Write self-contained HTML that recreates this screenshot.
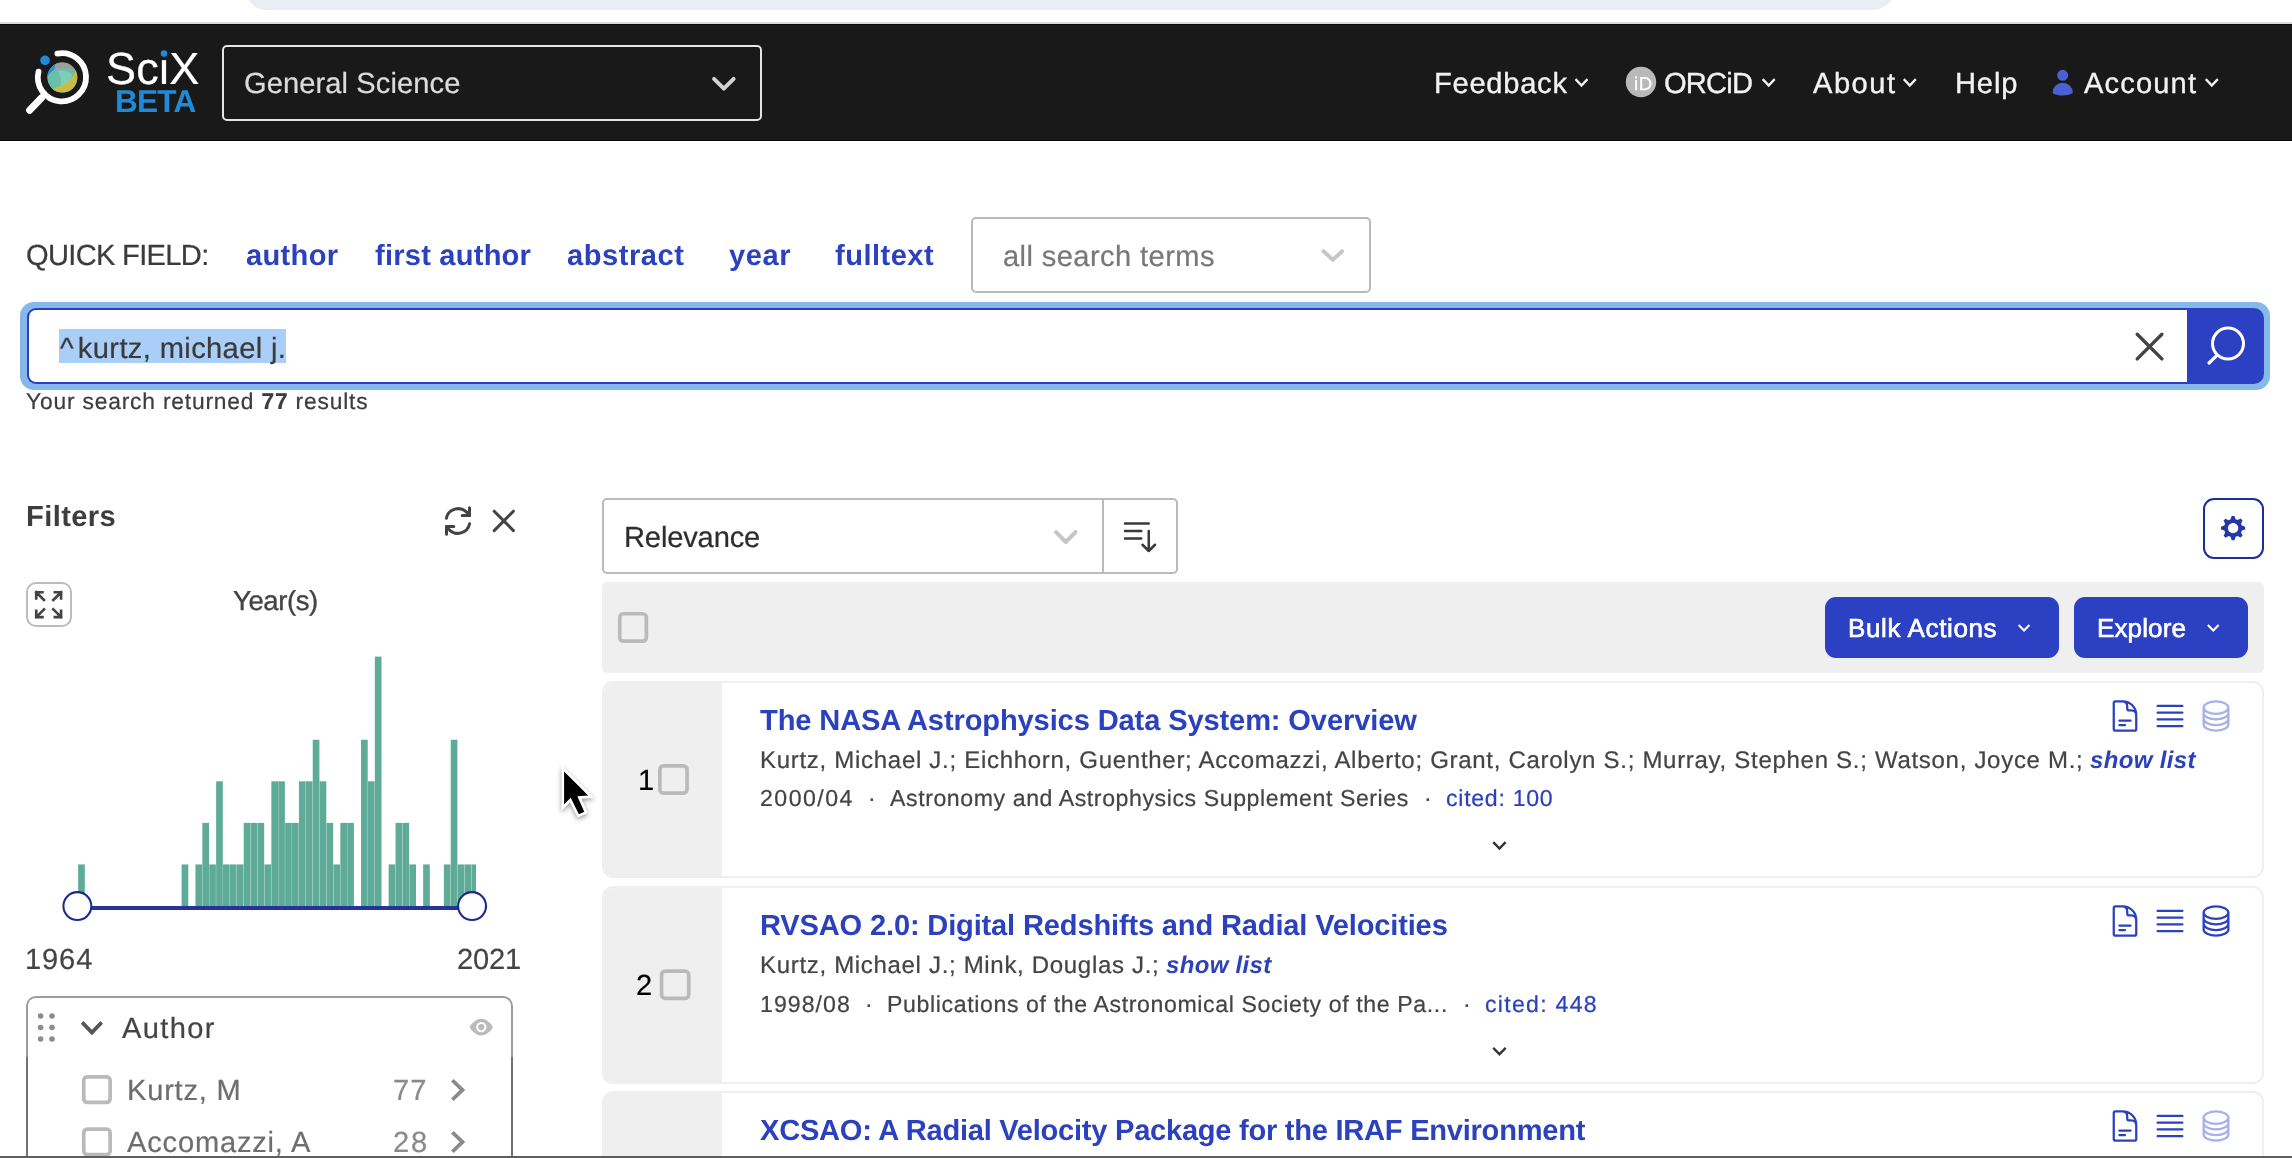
<!DOCTYPE html>
<html lang="en"><head><meta charset="utf-8"><title>SciX Search</title>
<style>
html,body{margin:0;padding:0;}
html{width:2292px;height:1158px;overflow:hidden;background:#fff;}
body{width:2292px;height:1158px;overflow:hidden;background:#fff;position:relative;font-family:"Liberation Sans", sans-serif;}
.g{position:absolute;left:0;top:0;width:2292px;height:1158px;margin:0;padding:0;display:block;overflow:hidden;}
.t{position:absolute;display:block;margin:0;padding:0;white-space:pre;line-height:normal;font-family:"Liberation Sans", sans-serif;font-weight:400;text-decoration:none;will-change:transform;text-rendering:geometricPrecision;}
.t b{font-weight:700;}

.cb{position:absolute;}

</style></head><body>
<div class="g" aria-label="browser chrome">
<div style="position:absolute;left:245.00px;top:-34.00px;width:1650.00px;height:44.00px;background:#e9edf6;border-radius:24px;"></div>
<div style="position:absolute;left:0.00px;top:22.00px;width:2292.00px;height:2.00px;background:#dadada;"></div>


</div>
<header class="g" aria-label="site header">
<div class="hdr" style="position:absolute;left:0.00px;top:24.00px;width:2292.00px;height:117.00px;background:#191919;border-top:1px solid #0b0b0b;border-bottom:1px solid #050505;box-sizing:border-box;"></div>
<svg style="position:absolute;left:0;top:0;overflow:visible;" width="2292" height="1158" viewBox="0 0 2292 1158">
<defs><clipPath id="gl"><circle cx="62.3" cy="77.6" r="15"/></clipPath></defs>
<g clip-path="url(#gl)">
 <rect x="45" y="60" width="36" height="36" fill="#6cbea8"/>
 <path d="M58 71 Q66 69 72 75 Q69 86 60 89 Q63 80 58 71 Z" fill="#80ceb8"/>
 <path d="M53 62 L78 62 L78 73 Q66 65 53 70 Z" fill="#9d9d9d"/>
 <path d="M46 66 L55.5 62 L54.5 69.5 Q50 72 47.5 77 Z" fill="#2e8fda"/>
 <path d="M75.8 69 Q73 83 53.5 88.6 L53 96 L81 96 L81 69 Z" fill="#c9ba49"/>
</g>
<path d="M57.4 53.6 A24.1 24.1 0 1 1 38.5 71.6" fill="none" stroke="#fff" stroke-width="5.8" stroke-linecap="round"/>
<line x1="41.6" y1="97.8" x2="29.6" y2="110.2" stroke="#fff" stroke-width="7" stroke-linecap="round"/>
<circle cx="45" cy="60.3" r="4.8" fill="#1f8ad8"/>
</svg>
<div style="position:absolute;left:222.00px;top:45.00px;width:540.00px;height:76.00px;box-sizing:border-box;border:2px solid #e4e4e4;border-radius:5px;"></div>
<svg style="position:absolute;left:0;top:0;overflow:visible;" width="2292" height="1158" viewBox="0 0 2292 1158"><polyline points="714.05,78.85 723.85,88.65 733.65,78.85" fill="none" stroke="#d2d2d2" stroke-width="3.9" stroke-linecap="round" stroke-linejoin="round"/><path d="M16.59 8.59L12 13.17 7.41 8.59 6 10l6 6 6-6z" fill="#f2f2f2" transform="translate(1567.90,67.98) scale(1.1333,1.2011)"/><path d="M16.59 8.59L12 13.17 7.41 8.59 6 10l6 6 6-6z" fill="#f2f2f2" transform="translate(1755.10,67.98) scale(1.1333,1.2011)"/><path d="M16.59 8.59L12 13.17 7.41 8.59 6 10l6 6 6-6z" fill="#f2f2f2" transform="translate(1896.20,67.98) scale(1.1333,1.2011)"/><path d="M16.59 8.59L12 13.17 7.41 8.59 6 10l6 6 6-6z" fill="#f2f2f2" transform="translate(2198.20,67.98) scale(1.1333,1.2011)"/><circle cx="1641" cy="82" r="15.2" fill="#b9b9b9"/></svg>
<svg style="position:absolute;left:2048.10px;top:67.80px;overflow:visible;" width="29.40" height="29.40" viewBox="0 0 24 24"><path d="M7.5 6a4.5 4.5 0 119 0 4.5 4.5 0 01-9 0zM3.751 20.105a8.25 8.25 0 0116.498 0 .75.75 0 01-.437.695A18.683 18.683 0 0112 22.5c-2.786 0-5.433-.608-7.812-1.7a.75.75 0 01-.437-.695z" fill="#4b61d3" fill-rule="evenodd"/></svg>
<span class="t" id="t0" style="left:106.33px;top:43.40px;font-size:45.0px;color:#fff;letter-spacing:0.206px;-webkit-text-stroke:0.22px currentColor;">SciX</span>
<span class="t" id="t1" style="left:114.59px;top:83.01px;font-size:31.6px;color:#1f8ad8;font-weight:700;letter-spacing:-0.787px;">BETA</span>
<span class="t" id="t2" style="left:1633.95px;top:72.81px;font-size:18.5px;color:#fff;letter-spacing:0.611px;-webkit-text-stroke:0.3px #fff;">iD</span>
<span class="t" id="t3" style="left:244.38px;top:68.01px;font-size:29.1px;color:#dcdcdc;letter-spacing:0.089px;-webkit-text-stroke:0.22px currentColor;">General Science</span>
<a class="t" id="t4" style="left:1433.98px;top:68.01px;font-size:29.1px;color:#f2f2f2;letter-spacing:0.737px;-webkit-text-stroke:0.35px currentColor;">Feedback</a>
<a class="t" id="t5" style="left:1664.48px;top:68.01px;font-size:29.1px;color:#f2f2f2;letter-spacing:-0.801px;-webkit-text-stroke:0.35px currentColor;">ORCiD</a>
<a class="t" id="t6" style="left:1812.98px;top:68.01px;font-size:29.1px;color:#f2f2f2;letter-spacing:1.501px;-webkit-text-stroke:0.35px currentColor;">About</a>
<a class="t" id="t7" style="left:1954.58px;top:68.01px;font-size:29.1px;color:#f2f2f2;letter-spacing:0.864px;-webkit-text-stroke:0.35px currentColor;">Help</a>
<a class="t" id="t8" style="left:2083.98px;top:68.01px;font-size:29.1px;color:#f2f2f2;letter-spacing:1.152px;-webkit-text-stroke:0.35px currentColor;">Account</a>
<svg style="position:absolute;left:0;top:0;overflow:visible;" width="2292" height="1158" viewBox="0 0 2292 1158"><rect x="160.5" y="48.5" width="7" height="7" fill="#191919"/><circle cx="164" cy="53.6" r="3.3" fill="#1f8ad8"/></svg>
</header>
<section class="g" aria-label="search">
<div style="position:absolute;left:971.00px;top:217.00px;width:400.00px;height:76.00px;box-sizing:border-box;border:2px solid #b9b9b9;border-radius:5px;background:#fff;"></div>
<svg style="position:absolute;left:0;top:0;overflow:visible;" width="2292" height="1158" viewBox="0 0 2292 1158"><polyline points="1323.50,251.30 1332.80,259.80 1342.10,251.30" fill="none" stroke="#c6c6c6" stroke-width="3.9" stroke-linecap="round" stroke-linejoin="round"/></svg>
<div style="position:absolute;left:20.00px;top:302.00px;width:2250.00px;height:88.00px;background:#87b8ea;border-radius:14px;"></div>
<div style="position:absolute;left:27.00px;top:308.00px;width:2159.50px;height:76.00px;box-sizing:border-box;border:2px solid #2a3ec0;border-right:none;border-radius:9px 0 0 9px;background:#fff;"></div>
<div style="position:absolute;left:2186.50px;top:308.00px;width:77.50px;height:76.00px;background:#2c40c4;border-radius:0 10px 10px 0;"></div>
<div style="position:absolute;left:58.60px;top:328.90px;width:227.60px;height:33.90px;background:#a9cef8;"></div>
<svg style="position:absolute;left:0;top:0;overflow:visible;" width="2292" height="1158" viewBox="0 0 2292 1158"><path d="M2137.2 334.2L2161.9 358.9M2161.9 334.2L2137.2 358.9" stroke="#444" stroke-width="3.4" stroke-linecap="round" fill="none"/><circle cx="2228" cy="343.6" r="15.5" fill="none" stroke="#fff" stroke-width="3"/><line x1="2217.2" y1="355.2" x2="2209" y2="363" stroke="#fff" stroke-width="3.2" stroke-linecap="round"/></svg>
<span class="t" id="t9" style="left:26.18px;top:240.01px;font-size:29.1px;color:#3b3b3b;letter-spacing:-0.684px;-webkit-text-stroke:0.22px currentColor;">QUICK FIELD:</span>
<a class="t" id="t10" style="left:245.78px;top:240.01px;font-size:29.1px;color:#2b41bd;font-weight:700;letter-spacing:0.304px;">author</a>
<a class="t" id="t11" style="left:374.58px;top:240.01px;font-size:29.1px;color:#2b41bd;font-weight:700;letter-spacing:0.216px;">first author</a>
<a class="t" id="t12" style="left:567.18px;top:240.01px;font-size:29.1px;color:#2b41bd;font-weight:700;letter-spacing:0.519px;">abstract</a>
<a class="t" id="t13" style="left:729.48px;top:240.01px;font-size:29.1px;color:#2b41bd;font-weight:700;letter-spacing:0.554px;">year</a>
<a class="t" id="t14" style="left:834.98px;top:240.01px;font-size:29.1px;color:#2b41bd;font-weight:700;letter-spacing:0.466px;">fulltext</a>
<span class="t" id="t15" style="left:1003.18px;top:240.51px;font-size:29.1px;color:#787878;letter-spacing:0.406px;-webkit-text-stroke:0.22px currentColor;">all search terms</span>
<span class="t" id="t16" style="left:59.78px;top:332.51px;font-size:29.1px;color:#3a3a3a;letter-spacing:0.373px;-webkit-text-stroke:0.22px currentColor;"><span style="letter-spacing:4.2px">^</span>kurtz, michael j.</span>
<span class="t" id="t17" style="left:26.40px;top:388.20px;font-size:22.8px;color:#3d3d3d;letter-spacing:0.812px;-webkit-text-stroke:0.22px currentColor;">Your search returned <b>77</b> results</span>

</section>
<aside class="g" aria-label="filters">
<svg style="position:absolute;left:0;top:0;overflow:visible;" width="2292" height="1158" viewBox="0 0 2292 1158"><g fill="none" stroke="#434343" stroke-width="3" stroke-linecap="round" stroke-linejoin="round"><path d="M446.4 518.3 A12 12 0 0 1 467.0 512.6 L469.5 515.5"/><path d="M469.5 507.8 V515.5 H462.2"/><path d="M469.6 523.7 A12 12 0 0 1 449.0 529.4 L446.5 526.5"/><path d="M446.5 534.2 V526.5 H453.8"/><path d="M494.2 511.2L513.4 530.6M513.4 511.2L494.2 530.6"/></g></svg>
<div style="position:absolute;left:26.20px;top:582.00px;width:45.80px;height:45.00px;box-sizing:border-box;border:2px solid #bcbcbc;border-radius:10px;background:#fff;"></div>
<svg style="position:absolute;left:30.35px;top:586.25px;overflow:visible;" width="37.30" height="37.30" viewBox="0 0 24 24"><path d="M4 8V4m0 0h4M4 4l5 5m11-1V4m0 0h-4m4 0l-5 5M4 16v4m0 0h4m-4 0l5-5m11 5l-5-5m5 5v-4m0 4h-4" fill="none" stroke="#444" stroke-width="1.7" stroke-linecap="square" stroke-linejoin="round"/></svg>
<svg style="position:absolute;left:0;top:0;overflow:visible;" width="2292" height="1158" viewBox="0 0 2292 1158"><g fill="#5eab97"><rect x="78.15" y="864.44" width="6.65" height="41.56"/><rect x="181.65" y="864.44" width="6.65" height="41.56"/><rect x="195.45" y="864.44" width="6.65" height="41.56"/><rect x="202.35" y="822.88" width="6.65" height="83.12"/><rect x="209.25" y="864.44" width="6.65" height="41.56"/><rect x="216.15" y="781.32" width="6.65" height="124.68"/><rect x="223.05" y="864.44" width="6.65" height="41.56"/><rect x="229.95" y="864.44" width="6.65" height="41.56"/><rect x="236.85" y="864.44" width="6.65" height="41.56"/><rect x="243.75" y="822.88" width="6.65" height="83.12"/><rect x="250.65" y="822.88" width="6.65" height="83.12"/><rect x="257.55" y="822.88" width="6.65" height="83.12"/><rect x="264.45" y="864.44" width="6.65" height="41.56"/><rect x="271.35" y="781.32" width="6.65" height="124.68"/><rect x="278.25" y="781.32" width="6.65" height="124.68"/><rect x="285.15" y="822.88" width="6.65" height="83.12"/><rect x="292.05" y="822.88" width="6.65" height="83.12"/><rect x="298.95" y="781.32" width="6.65" height="124.68"/><rect x="305.85" y="781.32" width="6.65" height="124.68"/><rect x="312.75" y="739.76" width="6.65" height="166.24"/><rect x="319.65" y="781.32" width="6.65" height="124.68"/><rect x="326.55" y="822.88" width="6.65" height="83.12"/><rect x="333.45" y="864.44" width="6.65" height="41.56"/><rect x="340.35" y="822.88" width="6.65" height="83.12"/><rect x="347.25" y="822.88" width="6.65" height="83.12"/><rect x="361.05" y="739.76" width="6.65" height="166.24"/><rect x="367.95" y="781.32" width="6.65" height="124.68"/><rect x="374.85" y="656.64" width="6.65" height="249.36"/><rect x="388.65" y="864.44" width="6.65" height="41.56"/><rect x="395.55" y="822.88" width="6.65" height="83.12"/><rect x="402.45" y="822.88" width="6.65" height="83.12"/><rect x="409.35" y="864.44" width="6.65" height="41.56"/><rect x="423.15" y="864.44" width="6.65" height="41.56"/><rect x="443.85" y="864.44" width="6.65" height="41.56"/><rect x="450.75" y="739.76" width="6.65" height="166.24"/><rect x="457.65" y="864.44" width="6.65" height="41.56"/><rect x="464.55" y="864.44" width="6.65" height="41.56"/><rect x="471.45" y="864.44" width="4.55" height="41.56"/></g><line x1="77" y1="907.95" x2="472" y2="907.95" stroke="#24349c" stroke-width="3.9"/><circle cx="77.37" cy="906.1" r="13.95" fill="#fff" stroke="#1b2a8f" stroke-width="2.1"/><circle cx="472.06" cy="906.1" r="13.95" fill="#fff" stroke="#1b2a8f" stroke-width="2.1"/></svg>
<div style="position:absolute;left:26.00px;top:1057.00px;width:487.00px;height:123.00px;box-sizing:border-box;border:2px solid #727272;border-top:none;background:#fff;"></div>
<div style="position:absolute;left:26.00px;top:996.00px;width:487.00px;height:61.00px;box-sizing:border-box;border:2px solid #9c9c9c;border-bottom:none;border-radius:10px 10px 0 0;background:#fff;"></div>
<svg style="position:absolute;left:0;top:0;overflow:visible;" width="2292" height="1158" viewBox="0 0 2292 1158"><g fill="#8c8c8c"><circle cx="40.6" cy="1016" r="2.8"/><circle cx="40.6" cy="1027.5" r="2.8"/><circle cx="40.6" cy="1039" r="2.8"/><circle cx="52" cy="1016" r="2.8"/><circle cx="52" cy="1027.5" r="2.8"/><circle cx="52" cy="1039" r="2.8"/></g><path d="M16.59 8.59L12 13.17 7.41 8.59 6 10l6 6 6-6z" fill="#565656" transform="translate(69.70,1004.75) scale(1.8500,1.9028)"/><path d="M23.432,10.524C20.787,7.614,16.4,4.538,12,4.6,7.6,4.537,3.213,7.615.568,10.524a2.211,2.211,0,0,0,0,2.948C3.182,16.351,7.507,19.4,11.839,19.4h.308c4.347,0,8.671-3.049,11.288-5.929A2.21,2.21,0,0,0,23.432,10.524Z" fill="#bababa" transform="translate(469.9,1013.45) scale(0.95,1.142)"/><circle cx="481.3" cy="1027.1" r="5.2" fill="#fff"/><circle cx="481.3" cy="1027.1" r="3.1" fill="#bababa"/><path d="M10 6L8.59 7.41 13.17 12l-4.58 4.59L10 18l6-6z" fill="#8a8a8a" transform="translate(434.54,1067.95) scale(1.9163,1.8417)"/><path d="M10 6L8.59 7.41 13.17 12l-4.58 4.59L10 18l6-6z" fill="#8a8a8a" transform="translate(434.54,1119.95) scale(1.9163,1.8417)"/></svg>
<svg style="position:absolute;left:0;top:0;overflow:visible;" width="2292" height="1158" viewBox="0 0 2292 1158"><rect x="83.75" y="1076.85" width="26.40" height="25.60" rx="3.6" fill="#fff" stroke="#bababa" stroke-width="3.7"/></svg>
<svg style="position:absolute;left:0;top:0;overflow:visible;" width="2292" height="1158" viewBox="0 0 2292 1158"><rect x="83.75" y="1129.05" width="26.40" height="25.60" rx="3.6" fill="#fff" stroke="#bababa" stroke-width="3.7"/></svg>
<h2 class="t" id="t18" style="left:26.48px;top:501.31px;font-size:29.1px;color:#3d3d3d;font-weight:700;letter-spacing:0.404px;">Filters</h2>
<h3 class="t" id="t19" style="left:233.34px;top:585.00px;font-size:27.5px;color:#444;letter-spacing:-0.419px;-webkit-text-stroke:0.35px currentColor;">Year(s)</h3>
<span class="t" id="t20" style="left:25.38px;top:943.92px;font-size:29.1px;color:#444;letter-spacing:0.868px;-webkit-text-stroke:0.22px currentColor;">1964</span>
<span class="t" id="t21" style="left:457.48px;top:943.92px;font-size:29.1px;color:#444;letter-spacing:-0.166px;-webkit-text-stroke:0.22px currentColor;">2021</span>
<h3 class="t" id="t22" style="left:121.98px;top:1012.61px;font-size:29.1px;color:#444;letter-spacing:1.344px;-webkit-text-stroke:0.22px currentColor;">Author</h3>
<span class="t" id="t23" style="left:127.28px;top:1074.61px;font-size:29.1px;color:#6e6e6e;letter-spacing:0.775px;-webkit-text-stroke:0.22px currentColor;">Kurtz, M</span>
<span class="t" id="t24" style="left:393.48px;top:1074.61px;font-size:29.1px;color:#8a8a8a;letter-spacing:1.162px;-webkit-text-stroke:0.22px currentColor;">77</span>
<span class="t" id="t25" style="left:127.28px;top:1126.51px;font-size:29.1px;color:#6e6e6e;letter-spacing:0.801px;-webkit-text-stroke:0.22px currentColor;">Accomazzi, A</span>
<span class="t" id="t26" style="left:392.94px;top:1126.51px;font-size:29.1px;color:#8a8a8a;letter-spacing:1.700px;-webkit-text-stroke:0.22px currentColor;">28</span>

</aside>
<main class="g" aria-label="results">
<div style="position:absolute;left:602.00px;top:498.00px;width:576.00px;height:76.00px;box-sizing:border-box;border:2px solid #bababa;border-radius:5px;background:#fff;"></div>
<div style="position:absolute;left:1102.00px;top:498.00px;width:2.00px;height:76.00px;background:#bababa;"></div>
<svg style="position:absolute;left:0;top:0;overflow:visible;" width="2292" height="1158" viewBox="0 0 2292 1158"><polyline points="1056.05,532.20 1065.80,542.00 1075.55,532.20" fill="none" stroke="#c6c6c6" stroke-width="4.0" stroke-linecap="round" stroke-linejoin="round"/></svg>
<svg style="position:absolute;left:1120.20px;top:515.90px;overflow:visible;" width="40.00" height="40.00" viewBox="0 0 24 24"><path d="M3 4.5h14.25M3 9h9.75M3 13.5h9.75m4.5-4.5v12m0 0l-3.75-3.75M17.25 21L21 17.25" fill="none" stroke="#3a3a3a" stroke-width="1.5" stroke-linecap="round" stroke-linejoin="round"/></svg>
<div style="position:absolute;left:2203.00px;top:497.90px;width:61.20px;height:61.00px;box-sizing:border-box;border:2px solid #1c2e9c;border-radius:11px;background:#fff;"></div>
<svg style="position:absolute;left:2220.90px;top:515.90px;overflow:visible;" width="24.20" height="24.20" viewBox="0 0 14 14"><path d="M14,7.77 L14,6.17 L12.06,5.53 L11.61,4.44 L12.49,2.6 L11.36,1.47 L9.55,2.38 L8.46,1.93 L7.77,0.01 L6.17,0.01 L5.54,1.95 L4.43,2.4 L2.59,1.52 L1.46,2.65 L2.37,4.46 L1.92,5.55 L0,6.23 L0,7.82 L1.94,8.46 L2.39,9.55 L1.51,11.39 L2.64,12.52 L4.45,11.61 L5.54,12.06 L6.23,13.98 L7.82,13.98 L8.45,12.04 L9.56,11.59 L11.4,12.47 L12.53,11.34 L11.61,9.53 L12.08,8.44 L14,7.75 L14,7.77 Z M7,10 C5.34,10 4,8.66 4,7 C4,5.34 5.34,4 7,4 C8.66,4 10,5.34 10,7 C10,8.66 8.66,10 7,10 Z" fill="#2437a8" fill-rule="evenodd"/></svg>
<div style="position:absolute;left:602.00px;top:581.80px;width:1662.00px;height:90.90px;background:#efefef;border-radius:5px;"></div>
<svg style="position:absolute;left:0;top:0;overflow:visible;" width="2292" height="1158" viewBox="0 0 2292 1158"><rect x="619.75" y="613.75" width="26.60" height="27.40" rx="3.6" fill="#efefef" stroke="#bababa" stroke-width="3.7"/></svg>
<div style="position:absolute;left:1824.70px;top:596.80px;width:234.50px;height:61.20px;background:#2c40c4;border-radius:11px;"></div>
<div style="position:absolute;left:2073.70px;top:596.80px;width:174.30px;height:61.20px;background:#2c40c4;border-radius:11px;"></div>
<svg style="position:absolute;left:0;top:0;overflow:visible;" width="2292" height="1158" viewBox="0 0 2292 1158"><path d="M16.59 8.59L12 13.17 7.41 8.59 6 10l6 6 6-6z" fill="#fff" transform="translate(2011.75,615.27) scale(1.0250,1.0391)"/><path d="M16.59 8.59L12 13.17 7.41 8.59 6 10l6 6 6-6z" fill="#fff" transform="translate(2200.95,615.27) scale(1.0250,1.0391)"/></svg>
<div class="card" style="position:absolute;left:602.00px;top:681.00px;width:1661.60px;height:197.40px;box-sizing:border-box;border:2px solid #eef0f0;border-radius:11px;background:#fff;overflow:hidden;"><div style="position:absolute;left:0;top:0;width:118px;height:100%;background:#efefef;"></div></div><svg style="position:absolute;left:0;top:0;overflow:visible;" width="2292" height="1158" viewBox="0 0 2292 1158"><rect x="659.85" y="765.85" width="27.20" height="27.20" rx="3.6" fill="#efefef" stroke="#bababa" stroke-width="3.7"/></svg><svg style="position:absolute;left:2107.00px;top:697.90px;overflow:visible;" width="36.00" height="36.00" viewBox="0 0 24 24"><path d="M19.5 14.25v-2.625a3.375 3.375 0 00-3.375-3.375h-1.5A1.125 1.125 0 0113.5 7.125v-1.5a3.375 3.375 0 00-3.375-3.375H8.25m0 12.75h7.5m-7.5 3H12M10.5 2.25H5.625c-.621 0-1.125.504-1.125 1.125v17.25c0 .621.504 1.125 1.125 1.125h12.75c.621 0 1.125-.504 1.125-1.125V11.25a9 9 0 00-9-9z" fill="none" stroke="#2b41bd" stroke-width="1.5" stroke-linecap="round" stroke-linejoin="round"/></svg><svg style="position:absolute;left:2152.00px;top:697.90px;overflow:visible;" width="36.00" height="36.00" viewBox="0 0 24 24"><path d="M3.75 5.25h16.5m-16.5 4.5h16.5m-16.5 4.5h16.5m-16.5 4.5h16.5" fill="none" stroke="#2b41bd" stroke-width="1.5" stroke-linecap="round" stroke-linejoin="round"/></svg><svg style="position:absolute;left:2198.00px;top:697.90px;overflow:visible;" width="36.00" height="36.00" viewBox="0 0 24 24"><path d="M20.25 6.375c0 2.278-3.694 4.125-8.25 4.125S3.75 8.653 3.75 6.375m16.5 0c0-2.278-3.694-4.125-8.25-4.125S3.75 4.097 3.75 6.375m16.5 0v11.25c0 2.278-3.694 4.125-8.25 4.125s-8.25-1.847-8.25-4.125V6.375m16.5 0v3.75m-16.5-3.75v3.75m16.5 0v3.75C20.25 16.153 16.556 18 12 18s-8.25-1.847-8.25-4.125v-3.75m16.5 0c0 2.278-3.694 4.125-8.25 4.125s-8.25-1.847-8.25-4.125" fill="none" stroke="#a6b1e6" stroke-width="1.5" stroke-linecap="round" stroke-linejoin="round"/></svg><svg style="position:absolute;left:0;top:0;overflow:visible;" width="2292" height="1158" viewBox="0 0 2292 1158"><path d="M16.59 8.59L12 13.17 7.41 8.59 6 10l6 6 6-6z" fill="#333" transform="translate(1485.35,830.98) scale(1.1750,1.2011)"/></svg>
<div class="card" style="position:absolute;left:602.00px;top:886.20px;width:1661.60px;height:197.40px;box-sizing:border-box;border:2px solid #eef0f0;border-radius:11px;background:#fff;overflow:hidden;"><div style="position:absolute;left:0;top:0;width:118px;height:100%;background:#efefef;"></div></div><svg style="position:absolute;left:0;top:0;overflow:visible;" width="2292" height="1158" viewBox="0 0 2292 1158"><rect x="661.55" y="971.15" width="27.20" height="27.20" rx="3.6" fill="#efefef" stroke="#bababa" stroke-width="3.7"/></svg><svg style="position:absolute;left:2107.00px;top:903.10px;overflow:visible;" width="36.00" height="36.00" viewBox="0 0 24 24"><path d="M19.5 14.25v-2.625a3.375 3.375 0 00-3.375-3.375h-1.5A1.125 1.125 0 0113.5 7.125v-1.5a3.375 3.375 0 00-3.375-3.375H8.25m0 12.75h7.5m-7.5 3H12M10.5 2.25H5.625c-.621 0-1.125.504-1.125 1.125v17.25c0 .621.504 1.125 1.125 1.125h12.75c.621 0 1.125-.504 1.125-1.125V11.25a9 9 0 00-9-9z" fill="none" stroke="#2b41bd" stroke-width="1.5" stroke-linecap="round" stroke-linejoin="round"/></svg><svg style="position:absolute;left:2152.00px;top:903.10px;overflow:visible;" width="36.00" height="36.00" viewBox="0 0 24 24"><path d="M3.75 5.25h16.5m-16.5 4.5h16.5m-16.5 4.5h16.5m-16.5 4.5h16.5" fill="none" stroke="#2b41bd" stroke-width="1.5" stroke-linecap="round" stroke-linejoin="round"/></svg><svg style="position:absolute;left:2198.00px;top:903.10px;overflow:visible;" width="36.00" height="36.00" viewBox="0 0 24 24"><path d="M20.25 6.375c0 2.278-3.694 4.125-8.25 4.125S3.75 8.653 3.75 6.375m16.5 0c0-2.278-3.694-4.125-8.25-4.125S3.75 4.097 3.75 6.375m16.5 0v11.25c0 2.278-3.694 4.125-8.25 4.125s-8.25-1.847-8.25-4.125V6.375m16.5 0v3.75m-16.5-3.75v3.75m16.5 0v3.75C20.25 16.153 16.556 18 12 18s-8.25-1.847-8.25-4.125v-3.75m16.5 0c0 2.278-3.694 4.125-8.25 4.125s-8.25-1.847-8.25-4.125" fill="none" stroke="#2b41bd" stroke-width="1.5" stroke-linecap="round" stroke-linejoin="round"/></svg><svg style="position:absolute;left:0;top:0;overflow:visible;" width="2292" height="1158" viewBox="0 0 2292 1158"><path d="M16.59 8.59L12 13.17 7.41 8.59 6 10l6 6 6-6z" fill="#333" transform="translate(1485.35,1036.78) scale(1.1750,1.2011)"/></svg>
<div class="card" style="position:absolute;left:602.00px;top:1091.40px;width:1661.60px;height:197.40px;box-sizing:border-box;border:2px solid #eef0f0;border-radius:11px;background:#fff;overflow:hidden;"><div style="position:absolute;left:0;top:0;width:118px;height:100%;background:#efefef;"></div></div><svg style="position:absolute;left:0;top:0;overflow:visible;" width="2292" height="1158" viewBox="0 0 2292 1158"><rect x="661.55" y="1176.35" width="27.20" height="27.20" rx="3.6" fill="#efefef" stroke="#bababa" stroke-width="3.7"/></svg><svg style="position:absolute;left:2107.00px;top:1108.30px;overflow:visible;" width="36.00" height="36.00" viewBox="0 0 24 24"><path d="M19.5 14.25v-2.625a3.375 3.375 0 00-3.375-3.375h-1.5A1.125 1.125 0 0113.5 7.125v-1.5a3.375 3.375 0 00-3.375-3.375H8.25m0 12.75h7.5m-7.5 3H12M10.5 2.25H5.625c-.621 0-1.125.504-1.125 1.125v17.25c0 .621.504 1.125 1.125 1.125h12.75c.621 0 1.125-.504 1.125-1.125V11.25a9 9 0 00-9-9z" fill="none" stroke="#2b41bd" stroke-width="1.5" stroke-linecap="round" stroke-linejoin="round"/></svg><svg style="position:absolute;left:2152.00px;top:1108.30px;overflow:visible;" width="36.00" height="36.00" viewBox="0 0 24 24"><path d="M3.75 5.25h16.5m-16.5 4.5h16.5m-16.5 4.5h16.5m-16.5 4.5h16.5" fill="none" stroke="#2b41bd" stroke-width="1.5" stroke-linecap="round" stroke-linejoin="round"/></svg><svg style="position:absolute;left:2198.00px;top:1108.30px;overflow:visible;" width="36.00" height="36.00" viewBox="0 0 24 24"><path d="M20.25 6.375c0 2.278-3.694 4.125-8.25 4.125S3.75 8.653 3.75 6.375m16.5 0c0-2.278-3.694-4.125-8.25-4.125S3.75 4.097 3.75 6.375m16.5 0v11.25c0 2.278-3.694 4.125-8.25 4.125s-8.25-1.847-8.25-4.125V6.375m16.5 0v3.75m-16.5-3.75v3.75m16.5 0v3.75C20.25 16.153 16.556 18 12 18s-8.25-1.847-8.25-4.125v-3.75m16.5 0c0 2.278-3.694 4.125-8.25 4.125s-8.25-1.847-8.25-4.125" fill="none" stroke="#a6b1e6" stroke-width="1.5" stroke-linecap="round" stroke-linejoin="round"/></svg>
<span class="t" id="t27" style="left:624.08px;top:522.11px;font-size:29.1px;color:#2d2d2d;letter-spacing:-0.156px;-webkit-text-stroke:0.22px currentColor;">Relevance</span>
<span class="t" id="t28" style="left:1847.89px;top:612.80px;font-size:26.0px;color:#fff;letter-spacing:0.634px;-webkit-text-stroke:0.65px #fff;">Bulk Actions</span>
<span class="t" id="t29" style="left:2096.99px;top:612.80px;font-size:26.0px;color:#fff;letter-spacing:0.127px;-webkit-text-stroke:0.65px #fff;">Explore</span>
<span class="t" id="t30" style="left:637.68px;top:765.01px;font-size:29.1px;color:#000;-webkit-text-stroke:0.22px currentColor;">1</span>
<a class="t" id="t31" style="left:759.68px;top:704.81px;font-size:29.1px;color:#2b41bd;font-weight:700;letter-spacing:-0.132px;">The NASA Astrophysics Data System: Overview</a>
<span class="t" id="t32" style="left:759.86px;top:746.71px;font-size:24.0px;color:#444;letter-spacing:0.710px;-webkit-text-stroke:0.22px currentColor;">Kurtz, Michael J.; Eichhorn, Guenther; Accomazzi, Alberto; Grant, Carolyn S.; Murray, Stephen S.; Watson, Joyce M.;</span>
<a class="t" id="t33" style="left:2089.96px;top:746.71px;font-size:24.0px;color:#2b41bd;font-weight:700;font-style:italic;letter-spacing:0.362px;">show list</a>
<span class="t" id="t34" style="left:759.89px;top:785.21px;font-size:23.1px;color:#444;letter-spacing:1.489px;-webkit-text-stroke:0.22px currentColor;">2000/04</span>
<span class="t" id="t35" style="left:868.15px;top:785.21px;font-size:23.1px;color:#444;-webkit-text-stroke:0.22px currentColor;">·</span>
<span class="t" id="t36" style="left:890.49px;top:785.21px;font-size:23.1px;color:#444;letter-spacing:0.591px;-webkit-text-stroke:0.22px currentColor;">Astronomy and Astrophysics Supplement Series</span>
<span class="t" id="t37" style="left:1423.65px;top:785.21px;font-size:23.1px;color:#444;-webkit-text-stroke:0.22px currentColor;">·</span>
<a class="t" id="t38" style="left:1445.89px;top:785.21px;font-size:23.1px;color:#2b41bd;letter-spacing:0.729px;-webkit-text-stroke:0.22px currentColor;">cited: 100</a>
<span class="t" id="t39" style="left:635.88px;top:970.31px;font-size:29.1px;color:#000;-webkit-text-stroke:0.22px currentColor;">2</span>
<a class="t" id="t40" style="left:759.68px;top:910.06px;font-size:29.1px;color:#2b41bd;font-weight:700;letter-spacing:-0.173px;">RVSAO 2.0: Digital Redshifts and Radial Velocities</a>
<span class="t" id="t41" style="left:759.86px;top:951.96px;font-size:24.0px;color:#444;letter-spacing:0.682px;-webkit-text-stroke:0.22px currentColor;">Kurtz, Michael J.; Mink, Douglas J.;</span>
<a class="t" id="t42" style="left:1165.86px;top:951.96px;font-size:24.0px;color:#2b41bd;font-weight:700;font-style:italic;letter-spacing:0.324px;">show list</a>
<span class="t" id="t43" style="left:759.89px;top:990.82px;font-size:23.1px;color:#444;letter-spacing:1.055px;-webkit-text-stroke:0.22px currentColor;">1998/08</span>
<span class="t" id="t44" style="left:864.95px;top:990.82px;font-size:23.1px;color:#444;-webkit-text-stroke:0.22px currentColor;">·</span>
<span class="t" id="t45" style="left:887.49px;top:990.82px;font-size:23.1px;color:#444;letter-spacing:0.629px;-webkit-text-stroke:0.22px currentColor;">Publications of the Astronomical Society of the Pa...</span>
<span class="t" id="t46" style="left:1463.15px;top:990.82px;font-size:23.1px;color:#444;-webkit-text-stroke:0.22px currentColor;">·</span>
<a class="t" id="t47" style="left:1485.19px;top:990.82px;font-size:23.1px;color:#2b41bd;letter-spacing:1.273px;-webkit-text-stroke:0.22px currentColor;">cited: 448</a>
<a class="t" id="t48" style="left:759.68px;top:1115.31px;font-size:29.1px;color:#2b41bd;font-weight:700;letter-spacing:-0.264px;">XCSAO: A Radial Velocity Package for the IRAF Environment</a>

</main>
<div class="g" aria-hidden="true">
<svg style="position:absolute;left:0;top:0;overflow:visible;" width="2292" height="1158" viewBox="0 0 2292 1158"><polygon points="564.1,771.6 564.1,804.4 570.7,797.8 578.9,814.2 584.3,811.8 577.3,796.3 588.2,795.5" fill="#000" stroke="#fff" stroke-width="5.2" stroke-linejoin="miter" paint-order="stroke" style="filter:drop-shadow(0px 2px 2.5px rgba(0,0,0,0.4));"/></svg><div style="position:absolute;left:0.00px;top:1156.00px;width:2292.00px;height:2.00px;background:#5e5e5e;"></div>
</div>
</body></html>
